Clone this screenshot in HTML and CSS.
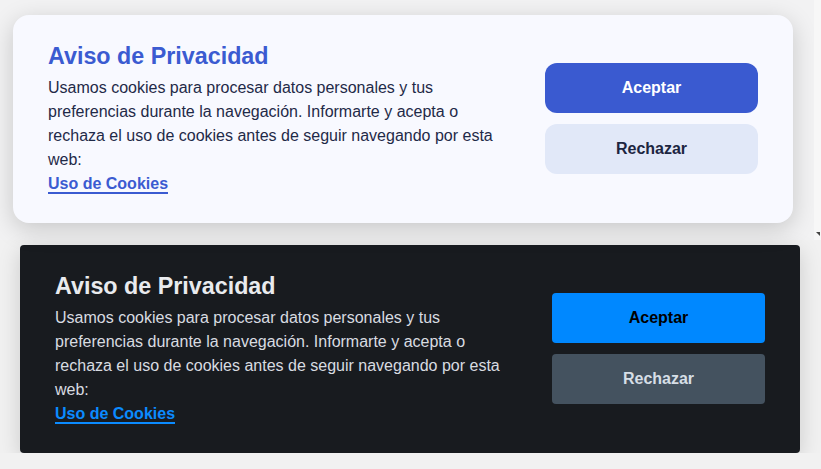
FILE: index.html
```html
<!DOCTYPE html>
<html lang="es">
<head>
    <meta charset="UTF-8">
    <meta name="viewport" content="width=device-width, initial-scale=1.0">
    <title>Aviso de Privacidad</title>
    <link rel="stylesheet" href="styles.css">
</head>
<body>
    <div class="frame">
        <div class="banner banner-light">
            <div class="banner-text">
                <h2>Aviso de Privacidad</h2>
                <p>Usamos cookies para procesar datos personales y tus preferencias durante la navegación. Informarte y acepta o rechaza el uso de cookies antes de seguir navegando por esta web:</p>
                <a href="#" class="banner-link">Uso de Cookies</a>
            </div>
            <div class="banner-actions">
                <button class="btn btn-accept">Aceptar</button>
                <button class="btn btn-reject">Rechazar</button>
            </div>
        </div>
        <div class="frame-track"><span class="grip"></span></div>
    </div>

    <div class="banner banner-dark">
        <div class="banner-text">
            <h2>Aviso de Privacidad</h2>
            <p>Usamos cookies para procesar datos personales y tus preferencias durante la navegación. Informarte y acepta o rechaza el uso de cookies antes de seguir navegando por esta web:</p>
            <a href="#" class="banner-link">Uso de Cookies</a>
        </div>
        <div class="banner-actions">
            <button class="btn btn-accept">Aceptar</button>
            <button class="btn btn-reject">Rechazar</button>
        </div>
    </div>
</body>
</html>
```

FILE: styles.css
```css
:root {
    /* Tema claro */
    --light-bg: #f8f9ff;
    --light-title: #3b5bd1;
    --light-text: #1f2a48;
    --light-accept: #3a5ad0;
    --light-reject: #e1e8f8;

    /* Tema oscuro */
    --dark-bg: #181b1f;
    --dark-title: #e9ebee;
    --dark-text: #d8dce1;
    --dark-link: #0b8bff;
    --dark-accept: #0088ff;
    --dark-reject: #44525f;
}

body {
    font-family: 'Liberation Sans', Arial, sans-serif;
    background-color: #f1f1f1;
    margin: 0;
}

.frame {
    display: flex;
    height: 240px;
    background-color: #f2f2f3;
}

.frame-track {
    margin-left: auto;
    width: 7px;
    background-color: #f7f7f7;
    display: flex;
    align-items: flex-end;
    justify-content: center;
    padding-bottom: 4px;
    box-sizing: border-box;
}

.grip {
    width: 0;
    height: 0;
    border-left: 4px solid transparent;
    border-top: 4px solid #444;
}

.banner {
    width: 780px;
    box-sizing: border-box;
    padding: 27px 35px;
    display: flex;
    align-items: center;
    gap: 32px;
}

.banner-light {
    margin: 15px 0 0 13px;
    height: 208px;
    background-color: var(--light-bg);
    border-radius: 16px;
    box-shadow: 0 6px 24px rgba(0, 0, 0, 0.18);
}

.banner-dark {
    margin: 5px 0 0 20px;
    height: 208px;
    background-color: var(--dark-bg);
    border-radius: 4px;
    box-shadow: 0 6px 22px rgba(0, 0, 0, 0.16);
}

.banner-text {
    flex: 1;
}

.banner h2 {
    margin: 0 0 5px;
    font-size: 23.3px;
    line-height: 29px;
    font-weight: bold;
}

.banner p {
    margin: 0;
    font-size: 16px;
    line-height: 24px;
}

.banner-link {
    font-size: 16px;
    line-height: 24px;
    font-weight: bold;
    text-decoration: none;
    border-bottom: 2px solid currentColor;
}

.banner-actions {
    width: 213px;
    display: flex;
    flex-direction: column;
    gap: 11px;
    margin-top: -1px;
}

.btn {
    height: 50px;
    border: none;
    font-family: inherit;
    font-size: 16px;
    font-weight: bold;
    cursor: pointer;
}

/* Claro */
.banner-light h2 { color: var(--light-title); }
.banner-light p { color: var(--light-text); }
.banner-light .banner-link { color: var(--light-title); }
.banner-light .btn { border-radius: 12px; }
.banner-light .btn-accept { background: var(--light-accept); color: #ffffff; }
.banner-light .btn-reject { background: var(--light-reject); color: #1c2541; }

/* Oscuro */
.banner-dark h2 { color: var(--dark-title); }
.banner-dark p { color: var(--dark-text); }
.banner-dark .banner-link { color: var(--dark-link); }
.banner-dark .btn { border-radius: 4px; }
.banner-dark .btn-accept { background: var(--dark-accept); color: #000000; }
.banner-dark .btn-reject { background: var(--dark-reject); color: #d6dee6; }
```
